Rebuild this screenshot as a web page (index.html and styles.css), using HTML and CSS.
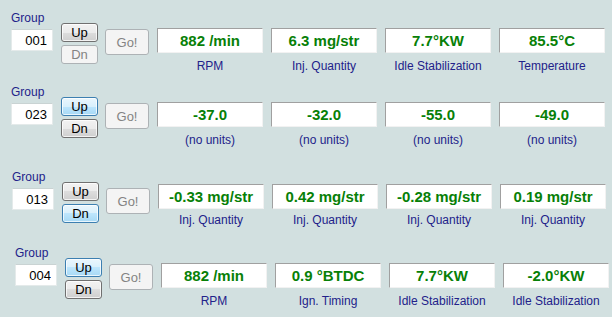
FILE: index.html
```html
<!DOCTYPE html>
<html lang="en">

<head>
    <meta charset="UTF-8">
    <meta name="viewport" content="width=device-width, initial-scale=1.0">
    <title>Measuring Blocks</title>
    <link rel="stylesheet" href="styles.css">
</head>

<body>
    <div class="panel">
        <!-- group 001 -->
        <div class="group">
            <div class="picker">
                <label class="picker-title" for="g1">Group</label>
                <input class="picker-num" id="g1" type="text" value="001">
            </div>
            <div class="steps">
                <button class="btn">Up</button>
                <button class="btn" disabled>Dn</button>
            </div>
            <button class="go" disabled>Go!</button>
            <div class="gauges">
                <div class="gauge"><div class="gauge-value">882 /min</div><div class="gauge-name">RPM</div></div>
                <div class="gauge"><div class="gauge-value">6.3 mg/str</div><div class="gauge-name">Inj. Quantity</div></div>
                <div class="gauge"><div class="gauge-value">7.7°KW</div><div class="gauge-name">Idle Stabilization</div></div>
                <div class="gauge"><div class="gauge-value">85.5°C</div><div class="gauge-name">Temperature</div></div>
            </div>
        </div>

        <!-- group 023 -->
        <div class="group group-2">
            <div class="picker">
                <label class="picker-title" for="g2">Group</label>
                <input class="picker-num" id="g2" type="text" value="023">
            </div>
            <div class="steps">
                <button class="btn hot">Up</button>
                <button class="btn">Dn</button>
            </div>
            <button class="go" disabled>Go!</button>
            <div class="gauges">
                <div class="gauge"><div class="gauge-value">-37.0</div><div class="gauge-name">(no units)</div></div>
                <div class="gauge"><div class="gauge-value">-32.0</div><div class="gauge-name">(no units)</div></div>
                <div class="gauge"><div class="gauge-value">-55.0</div><div class="gauge-name">(no units)</div></div>
                <div class="gauge"><div class="gauge-value">-49.0</div><div class="gauge-name">(no units)</div></div>
            </div>
        </div>

        <!-- group 013 -->
        <div class="group group-3">
            <div class="picker">
                <label class="picker-title" for="g3">Group</label>
                <input class="picker-num" id="g3" type="text" value="013">
            </div>
            <div class="steps">
                <button class="btn">Up</button>
                <button class="btn hot">Dn</button>
            </div>
            <button class="go" disabled>Go!</button>
            <div class="gauges">
                <div class="gauge"><div class="gauge-value">-0.33 mg/str</div><div class="gauge-name">Inj. Quantity</div></div>
                <div class="gauge"><div class="gauge-value">0.42 mg/str</div><div class="gauge-name">Inj. Quantity</div></div>
                <div class="gauge"><div class="gauge-value">-0.28 mg/str</div><div class="gauge-name">Inj. Quantity</div></div>
                <div class="gauge"><div class="gauge-value">0.19 mg/str</div><div class="gauge-name">Inj. Quantity</div></div>
            </div>
        </div>

        <!-- group 004 -->
        <div class="group group-4">
            <div class="picker">
                <label class="picker-title" for="g4">Group</label>
                <input class="picker-num" id="g4" type="text" value="004">
            </div>
            <div class="steps">
                <button class="btn hot">Up</button>
                <button class="btn">Dn</button>
            </div>
            <button class="go" disabled>Go!</button>
            <div class="gauges">
                <div class="gauge"><div class="gauge-value">882 /min</div><div class="gauge-name">RPM</div></div>
                <div class="gauge"><div class="gauge-value">0.9 °BTDC</div><div class="gauge-name">Ign. Timing</div></div>
                <div class="gauge"><div class="gauge-value">7.7°KW</div><div class="gauge-name">Idle Stabilization</div></div>
                <div class="gauge"><div class="gauge-value">-2.0°KW</div><div class="gauge-name">Idle Stabilization</div></div>
            </div>
        </div>
    </div>
</body>

</html>
```

FILE: styles.css
```css
* {
    margin: 0;
    padding: 0;
    box-sizing: border-box;
}

body {
    background-color: #d2e0e0;
    font-family: "Liberation Sans", Arial, sans-serif;
}

.panel {
    padding-top: 11px;
}

/* one measuring block row */
.group {
    display: flex;
    align-items: flex-start;
    height: 62px;
    margin-left: 11px;
}

.group-2 {
    margin-top: 12px;
}

.group-3 {
    margin-top: 23px;
    margin-left: 12px;
}

.group-3 .gauges {
    margin-top: 14px;
}

.group-3 .gauge-name {
    margin-top: 4px;
}

.group-4 {
    margin-top: 14px;
    margin-left: 15px;
}

/* group number */
.picker {
    width: 42px;
    display: flex;
    flex-direction: column;
}

.picker-title {
    height: 14px;
    font-size: 12px;
    line-height: 14px;
    color: #22228a;
}

.picker-num {
    margin-top: 4px;
    width: 42px;
    height: 22px;
    padding-right: 5px;
    border: 1px solid #e4eaea;
    border-top-color: #c9d3d3;
    background-color: #fff;
    font-family: inherit;
    font-size: 13px;
    color: #000;
    text-align: right;
    outline: none;
}

/* up / down buttons */
.steps {
    margin-left: 8px;
    margin-top: 12px;
    display: flex;
    flex-direction: column;
    gap: 3px;
}

.btn,
.go {
    appearance: none;
    font-family: inherit;
    font-size: 13px;
    color: #000;
    border: 1px solid #707070;
    border-radius: 3px;
    background: linear-gradient(#f2f2f2 0%, #ebebeb 50%, #dddddd 50%, #cfcfcf 100%);
    box-shadow: inset 0 0 0 1px rgba(255, 255, 255, .75);
}

.btn {
    width: 37px;
    height: 19px;
    line-height: 17px;
}

.btn.hot {
    border-color: #3c7fb1;
    background: linear-gradient(#eaf6fd 0%, #d9f0fc 50%, #bee6fd 50%, #a7d9f5 100%);
}

.btn:disabled,
.go:disabled {
    border-color: #adb2b5;
    background: #f4f4f4;
    color: #838383;
    box-shadow: none;
}

.go {
    margin-left: 7px;
    margin-top: 18px;
    width: 44px;
    height: 26px;
}

/* value displays */
.gauges {
    margin-left: 8px;
    margin-top: 17px;
    display: flex;
    gap: 8px;
}

.gauge {
    width: 106px;
}

.gauge-value {
    height: 25px;
    line-height: 23px;
    background-color: #fff;
    border: 1px solid;
    border-color: #a0a0a0 #f2f2f2 #f2f2f2 #a0a0a0;
    font-size: 15px;
    font-weight: bold;
    color: #078007;
    text-align: center;
    white-space: nowrap;
}

.gauge-name {
    margin-top: 6px;
    font-size: 12px;
    line-height: 14px;
    color: #22228a;
    text-align: center;
    white-space: nowrap;
}
```
